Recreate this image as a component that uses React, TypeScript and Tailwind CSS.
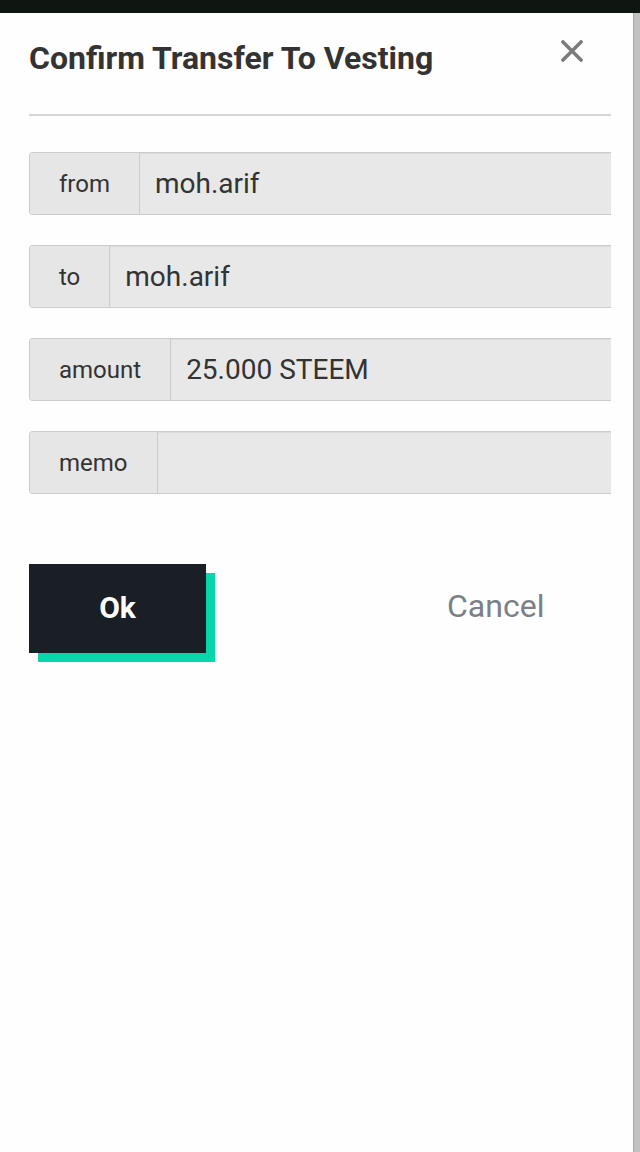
import React from 'react';

const rows = [
  { label: 'from', value: 'moh.arif' },
  { label: 'to', value: 'moh.arif' },
  { label: 'amount', value: '25.000 STEEM' },
  { label: 'memo', value: '' },
];

function CloseIcon() {
  return (
    <svg width="22" height="22" viewBox="0 0 22 22" className="block">
      <path d="M2 2 L20 20 M20 2 L2 20" stroke="#7c7c7c" strokeWidth="3.5" strokeLinecap="square" />
    </svg>
  );
}

export default function App() {
  return (
    <div className="flex h-[1152px] w-[640px] flex-col overflow-hidden bg-white font-['Roboto','Liberation_Sans',sans-serif]">
      {/* status strip */}
      <div className="h-[13px] bg-[#0f1611]" />

      <div className="flex flex-1">
        {/* dialog */}
        <div className="flex-1 bg-[#fefefe] pl-[29px] pr-[22px] pt-[27px]">
          <div className="flex items-start justify-between">
            <h2 className="text-[32px] font-bold leading-[36px] text-[#333333]">
              Confirm Transfer To Vesting
            </h2>
            <div className="mr-[28px] mt-[0px]">
              <CloseIcon />
            </div>
          </div>

          <div className="mt-[38px] h-[2px] bg-[#d6d6d6]" />

          <div className="mt-[36px] flex flex-col gap-[30px]">
            {rows.map((row) => (
              <div
                key={row.label}
                className="flex h-[63px] overflow-hidden rounded-l-[4px] border border-r-0 border-[#cccccc]"
              >
                <div className="flex items-center border-r border-[#cccccc] bg-[#e6e6e6] px-[29px] text-[24px] text-[#333333]">
                  {row.label}
                </div>
                <div className="flex flex-1 items-center bg-[#e8e8e8] pl-[15px] text-[28px] text-[#333333] shadow-[inset_0_1px_1px_rgba(0,0,0,0.06)]">
                  {row.value}
                </div>
              </div>
            ))}
          </div>

          <div className="mt-[70px] flex items-center">
            <button className="flex h-[89px] w-[177px] items-center justify-center bg-[#1a1f25] pb-[2px] text-[30px] font-bold text-white shadow-[9px_9px_0_#06d6a9]">
              Ok
            </button>
            <button className="mb-[6px] ml-[241px] text-[32px] text-[#7b8087]">Cancel</button>
          </div>
        </div>

        {/* scrollbar */}
        <div className="w-[7px] border-l border-[#a9a9a9] bg-[#c2c2c2]" />
      </div>
    </div>
  );
}
